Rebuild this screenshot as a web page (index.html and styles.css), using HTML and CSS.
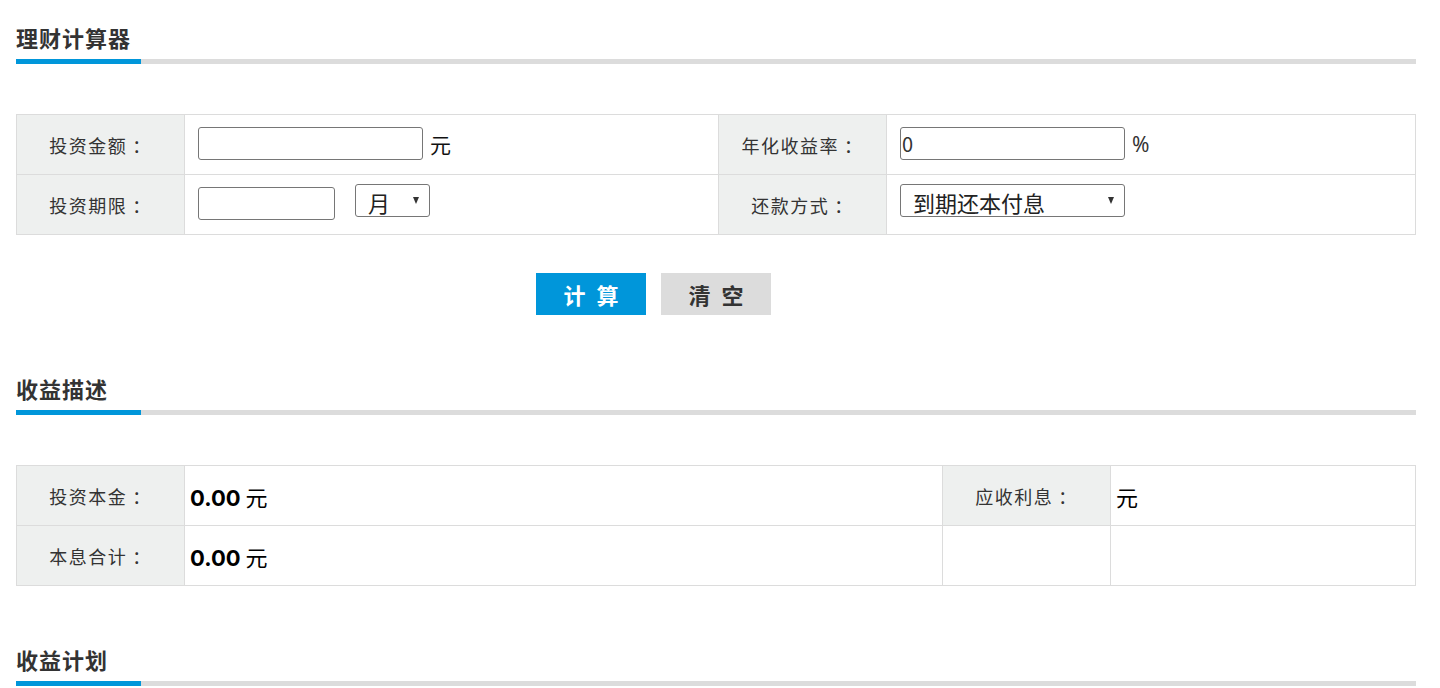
FILE: index.html
```html
<!DOCTYPE html>
<html lang="zh-CN">
<head>
<meta charset="utf-8">
<title>理财计算器</title>
<link rel="stylesheet" href="styles.css">
</head>
<body>
<div class="page">
  <div class="sec-head sec-first">
    <h2 class="sec-title">理财计算器</h2>
    <div class="sec-bar"><span class="sec-bar-fill"></span></div>
  </div>

  <table class="grid grid-form">
    <colgroup>
      <col class="c-label"><col class="c-val1"><col class="c-label"><col>
    </colgroup>
    <tr>
      <th class="lbl">投资金额<span class="colon">：</span></th>
      <td class="val"><div class="field"><input type="text" class="inp inp-wide"><span class="unit">元</span></div></td>
      <th class="lbl">年化收益率<span class="colon">：</span></th>
      <td class="val"><div class="field"><input type="text" class="inp inp-wide" value="0"><span class="unit unit-pct">%</span></div></td>
    </tr>
    <tr>
      <th class="lbl">投资期限<span class="colon">：</span></th>
      <td class="val"><div class="field"><input type="text" class="inp inp-short"><div class="sel sel-month"><span class="sel-text">月</span><i class="arrow"></i></div></div></td>
      <th class="lbl">还款方式<span class="colon">：</span></th>
      <td class="val"><div class="field"><div class="sel sel-wide"><span class="sel-text">到期还本付息</span><i class="arrow"></i></div></div></td>
    </tr>
  </table>

  <div class="actions">
    <button class="btn btn-primary" type="button">计 算</button>
    <button class="btn btn-gray" type="button">清 空</button>
  </div>

  <div class="sec-head">
    <h2 class="sec-title">收益描述</h2>
    <div class="sec-bar"><span class="sec-bar-fill"></span></div>
  </div>

  <table class="grid grid-result">
    <colgroup>
      <col class="c-label"><col class="c-val2"><col class="c-label"><col>
    </colgroup>
    <tr>
      <th class="lbl">投资本金<span class="colon">：</span></th>
      <td class="val val-res"><b class="num">0.00</b> 元</td>
      <th class="lbl">应收利息<span class="colon">：</span></th>
      <td class="val val-res">元</td>
    </tr>
    <tr>
      <th class="lbl">本息合计<span class="colon">：</span></th>
      <td class="val val-res"><b class="num">0.00</b> 元</td>
      <td class="val"></td>
      <td class="val"></td>
    </tr>
  </table>

  <div class="sec-head">
    <h2 class="sec-title">收益计划</h2>
    <div class="sec-bar"><span class="sec-bar-fill"></span></div>
  </div>
</div>
</body>
</html>
```
FILE: styles.css
```css
html, body {
  margin: 0;
  padding: 0;
  background: #fff;
}
body {
  font-family: "Noto Sans CJK SC", "Noto Sans", sans-serif;
  color: #333;
}
.page {
  padding: 0 24px 0 16px;
}
.sec-head {
  margin-top: 58px;
}
.sec-first {
  margin-top: 22px;
}
.sec-title {
  margin: 0;
  font-size: 22px;
  line-height: 30px;
  font-weight: bold;
  letter-spacing: 1px;
  color: #333;
}
.sec-bar {
  margin-top: 7px;
  height: 5px;
  background: #dcdcdc;
}
.sec-bar-fill {
  display: block;
  width: 125px;
  height: 5px;
  background: #0096da;
}
.grid {
  width: 100%;
  margin-top: 50px;
  border-collapse: collapse;
  table-layout: fixed;
}
.c-label { width: 168px; }
.c-val1 { width: 534px; }
.c-val2 { width: 758px; }
.grid th, .grid td {
  border: 1px solid #dcdcdc;
  height: 59px;
  padding: 0;
}
.lbl {
  background: #eef0ef;
  font-weight: normal;
  font-size: 18px;
  letter-spacing: 1.5px;
  color: #333;
  text-align: center;
}
.colon {
  margin-left: 5px;
}
.val {
  padding: 0 13px !important;
  text-align: left;
  font-size: 22px;
  color: #111;
}
.field {
  display: flex;
  align-items: flex-start;
  height: 59px;
  padding-top: 12px;
  box-sizing: border-box;
}
.inp {
  box-sizing: border-box;
  height: 33px;
  margin: 0;
  border: 1px solid #767676;
  border-radius: 3px;
  padding: 0 1px;
  font-family: "Noto Sans CJK SC", "Noto Sans", sans-serif;
  font-size: 20px;
  color: #333;
  background: #fff;
}
.inp-wide { width: 225px; }
.inp-short { width: 137px; }
.unit {
  margin-left: 7px;
  font-size: 21px;
  line-height: 35px;
  color: #111;
}
.unit-pct {
  margin-left: 7px;
  font-family: "Noto Sans", sans-serif;
  color: #333;
}
.sel {
  box-sizing: border-box;
  display: flex;
  align-items: flex-start;
  justify-content: space-between;
  height: 33px;
  margin-top: -3px;
  border: 1px solid #767676;
  border-radius: 3px;
  padding: 5px 10px 0 12px;
  overflow: hidden;
  font-size: 22px;
  color: #222;
  background: #fff;
}
.sel-text {
  display: block;
  line-height: 24px;
  white-space: nowrap;
}
.sel-month { width: 75px; margin-left: 20px; }
.sel-wide { width: 225px; }
.arrow {
  flex: none;
  width: 0;
  height: 0;
  border-left: 3.5px solid transparent;
  border-right: 3.5px solid transparent;
  border-top: 7px solid #333;
  margin-top: 7px;
}
.actions {
  margin-top: 38px;
  padding-left: 520px;
  display: flex;
  gap: 15px;
}
.btn {
  width: 110px;
  height: 42px;
  border: 0;
  padding: 0 0 0 3px;
  font-family: "Noto Sans CJK SC", "Noto Sans", sans-serif;
  font-size: 22px;
  font-weight: bold;
  letter-spacing: 3px;
  cursor: pointer;
}
.btn-primary {
  background: #0096da;
  color: #fff;
}
.btn-gray {
  background: #dcdcdc;
  color: #333;
}
.val-res {
  padding-left: 5px !important;
  color: #000;
}
.num {
  font-family: "Inter", "Noto Sans", sans-serif;
  font-size: 22px;
  font-weight: bold;
}
```
